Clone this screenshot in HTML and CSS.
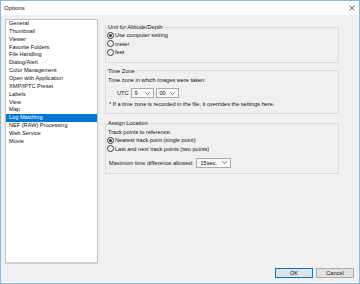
FILE: index.html
```html
<!DOCTYPE html>
<html>
<head>
<meta charset="utf-8">
<link rel="stylesheet" href="styles.css">
</head>
<body>
<div class="window">
  <div class="titlebar">
    <span class="title">Options</span>
    <svg class="close" width="6" height="6" viewBox="0 0 6 6"><path d="M0.5 0.5 L5.5 5.5 M5.5 0.5 L0.5 5.5" stroke="#555" stroke-width="0.9" fill="none"/></svg>
  </div>
  <div class="content">
    <div class="main">
      <ul class="list">
        <li>General</li>
        <li>Thumbnail</li>
        <li>Viewer</li>
        <li>Favorite Folders</li>
        <li>File Handling</li>
        <li>Dialog/Alert</li>
        <li>Color Management</li>
        <li>Open with Application</li>
        <li>XMP/IPTC Preset</li>
        <li>Labels</li>
        <li>View</li>
        <li>Map</li>
        <li class="selected">Log Matching</li>
        <li>NEF (RAW) Processing</li>
        <li>Web Service</li>
        <li>Movie</li>
      </ul>
      <div class="panel">
        <fieldset class="group g1">
          <legend>Unit for Altitude/Depth</legend>
          <div class="radio-row"><span class="radio checked"></span>Use computer setting</div>
          <div class="radio-row"><span class="radio"></span>meter</div>
          <div class="radio-row"><span class="radio"></span>feet</div>
        </fieldset>
        <fieldset class="group g2">
          <legend>Time Zone</legend>
          <div class="text-row">Time zone in which images were taken:</div>
          <div class="utc-row">
            <span class="utc-label">UTC</span>
            <div class="select s-hour"><span>9</span><svg width="5" height="3" viewBox="0 0 5 3"><path d="M0.3 0.3 L2.5 2.5 L4.7 0.3" stroke="#444" stroke-width="0.7" fill="none"/></svg></div>
            <div class="select s-min"><span>00</span><svg width="5" height="3" viewBox="0 0 5 3"><path d="M0.3 0.3 L2.5 2.5 L4.7 0.3" stroke="#444" stroke-width="0.7" fill="none"/></svg></div>
          </div>
          <div class="note">* If a time zone is recorded in the file, it overrides the settings here.</div>
        </fieldset>
        <fieldset class="group g3">
          <legend>Assign Location</legend>
          <div class="text-row">Track points to reference:</div>
          <div class="radio-row"><span class="radio checked"></span>Nearest track point (single point)</div>
          <div class="radio-row"><span class="radio"></span>Last and next track points (two points)</div>
          <div class="max-row">
            <span class="max-label">Maximum time difference allowed:</span>
            <div class="select s-sec"><span>15sec.</span><svg width="5" height="3" viewBox="0 0 5 3"><path d="M0.3 0.3 L2.5 2.5 L4.7 0.3" stroke="#444" stroke-width="0.7" fill="none"/></svg></div>
          </div>
        </fieldset>
      </div>
    </div>
    <div class="footer">
      <button class="btn ok">OK</button>
      <button class="btn">Cancel</button>
    </div>
  </div>
</div>
</body>
</html>
```
FILE: styles.css
```css
* { box-sizing: border-box; }
html, body {
  margin: 0;
  padding: 0;
  width: 360px;
  height: 284px;
  overflow: hidden;
  background: #f0f0f0;
}
body {
  font-family: "Liberation Sans", Arial, sans-serif;
  font-size: 5.6px;
  color: #111;
}
.window {
  width: 360px;
  height: 284px;
  border: 1px solid #86bbe6;
  display: flex;
  flex-direction: column;
  background: #f0f0f0;
}
.titlebar {
  height: 14px;
  background: #fff;
  display: flex;
  align-items: center;
  justify-content: space-between;
  padding: 0 4px 0 3px;
  flex-shrink: 0;
}
.title {
  font-size: 6px;
  line-height: 8px;
}
.close { display: block; }
.content {
  flex: 1;
  display: flex;
  flex-direction: column;
  padding: 4px;
  border-bottom: 1px solid #fff;
}
.main {
  display: flex;
  gap: 7px;
}
.list {
  list-style: none;
  margin: 0;
  padding: 0;
  width: 93px;
  height: 245px;
  background: #fff;
  border: 1px solid #c2c2c2;
  border-bottom: 2px solid #cfcfcf;
}
.list li {
  line-height: 7.87px;
  height: 7.87px;
  padding-left: 3px;
  white-space: nowrap;
}
.list li.selected {
  background: #0078d7;
  color: #fff;
}
.panel {
  flex: 1;
  display: flex;
  flex-direction: column;
  padding-top: 4px;
  padding-right: 16px;
}
.group {
  margin: 0;
  padding: 0 2px 0 1px;
  border: 1px solid #dcdcdc;
  min-width: 0;
}
.group legend {
  padding: 0;
  margin-left: 1px;
  line-height: 8px;
}
.g1 { padding-bottom: 5px; }
.g2 { margin-top: 4px; padding-bottom: 4px; }
.g3 { margin-top: 5px; padding-bottom: 5px; }
.radio-row {
  display: flex;
  align-items: center;
  height: 8.6px;
  white-space: nowrap;
}
.g3 .radio-row { height: 8.2px; }
.radio {
  width: 7px;
  height: 7px;
  border: 1px solid #333;
  border-radius: 50%;
  background: #fff;
  margin-right: 1px;
  display: flex;
  align-items: center;
  justify-content: center;
  flex-shrink: 0;
}
.radio.checked::after {
  content: "";
  width: 3px;
  height: 3px;
  border-radius: 50%;
  background: #333;
}
.text-row {
  height: 8.5px;
  line-height: 8.5px;
  padding-top: 1px;
  box-sizing: content-box;
  padding-left: 1px;
  white-space: nowrap;
}
.g3 .text-row { height: 8px; line-height: 8px; }
.utc-row {
  display: flex;
  align-items: center;
  margin-top: 4px;
  height: 10px;
  padding-left: 10px;
  gap: 2px;
}
.select {
  height: 10px;
  background: #f7f7f7;
  border: 1px solid #acacac;
  display: flex;
  align-items: center;
  justify-content: space-between;
  padding: 0 3px;
}
.s-hour { width: 23px; }
.s-min { width: 23px; }
.s-sec { width: 35px; }
.note {
  margin-top: 2px;
  line-height: 9px;
  padding-left: 2px;
  white-space: nowrap;
}
.max-row {
  display: flex;
  align-items: center;
  gap: 3px;
  margin-top: 5px;
  padding-left: 2px;
}
.footer {
  margin-top: auto;
  display: flex;
  justify-content: flex-end;
  gap: 3px;
  padding-right: 1px;
}
.btn {
  width: 38px;
  height: 10px;
  padding: 0;
  font-family: "Liberation Sans", Arial, sans-serif;
  font-size: 5.6px;
  line-height: 8px;
  background: #e1e1e1;
  border: 1px solid #adadad;
  color: #111;
}
.btn.ok {
  border: 1px solid #0078d7;
}
```
